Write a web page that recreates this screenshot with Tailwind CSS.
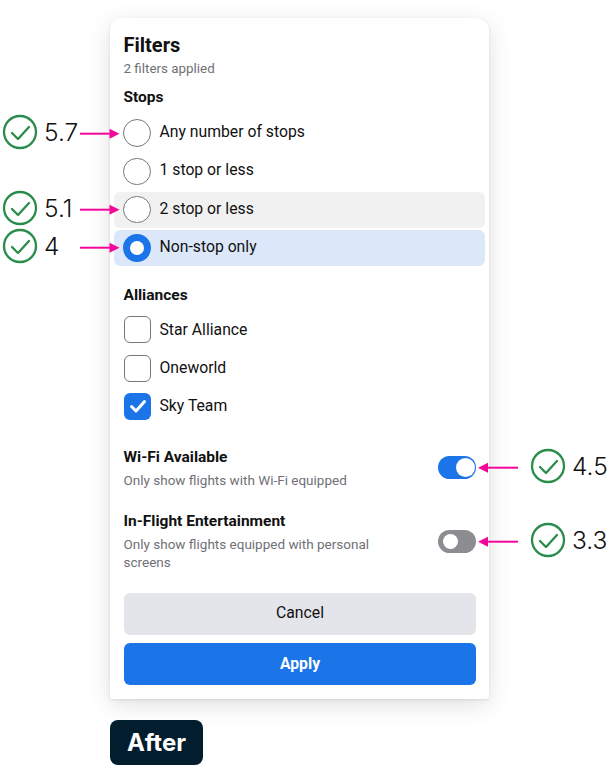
<!DOCTYPE html>
<html><head><meta charset="utf-8"><script src="https://cdn.jsdelivr.net/npm/@tailwindcss/browser@4"></script></head>
<body class="bg-white font-['Roboto',sans-serif] text-[#111] overflow-hidden">
<div class="relative w-[614px] h-[770px] overflow-hidden">
  <div class="ml-[110px] mt-[18px] w-[379px] h-[681px] bg-white rounded-t-[12px] rounded-b-[2px] shadow-[0_6px_24px_rgba(0,0,0,0.12),0_1px_3px_rgba(0,0,0,0.10)] pt-[16px] pl-[14px] pr-[13px] flex flex-col">
    <div class="text-[20px] leading-[22px] font-bold -ml-[0.5px]">Filters</div>
    <div class="text-[13.4px] leading-[16px] mt-[5px] text-[#6f7076] -ml-[0.5px]">2 filters applied</div>
    <div class="text-[15.5px] leading-[18px] mt-[11px] font-bold -ml-[0.5px]">Stops</div>
    <div class="flex flex-col mt-[9px] -ml-[10px] -mr-[9px]">
      <div class="h-[36px] flex items-center gap-[9px] pl-[9px] mb-[2.3px] text-[15.75px]"><span class="w-[27.5px] h-[27.5px] rounded-full border border-[#77777b] bg-white"></span><span class="-mt-[2px]">Any number of stops</span></div>
      <div class="h-[36px] flex items-center gap-[9px] pl-[9px] mb-[2.3px] text-[15.75px]"><span class="w-[27.5px] h-[27.5px] rounded-full border border-[#77777b] bg-white"></span><span class="-mt-[2px]">1 stop or less</span></div>
      <div class="h-[36px] flex items-center gap-[9px] pl-[9px] mb-[2.3px] text-[15.75px] bg-[#f1f1f1] rounded-[6px]"><span class="w-[27.5px] h-[27.5px] rounded-full border border-[#77777b] bg-white"></span><span class="-mt-[2px]">2 stop or less</span></div>
      <div class="h-[36px] flex items-center gap-[9px] pl-[9px] text-[15.75px] bg-[#dce8fa] rounded-[6px]"><span class="w-[27.5px] h-[27.5px] rounded-full border-[7px] border-[#1b74e8] bg-white"></span><span class="-mt-[2px]">Non-stop only</span></div>
    </div>
    <div class="text-[15.5px] leading-[18px] mt-[20px] font-bold -ml-[0.5px]">Alliances</div>
    <div class="flex flex-col mt-[7.5px]">
      <div class="h-[36px] flex items-center gap-[8.5px] mb-[3.5px] text-[15.75px]"><span class="w-[27px] h-[27px] rounded-[6px] border border-[#77777b]"></span><span class="mt-[1px]">Star Alliance</span></div>
      <div class="h-[36px] flex items-center gap-[8.5px] mb-[1.5px] text-[15.75px]"><span class="w-[27px] h-[27px] rounded-[6px] border border-[#77777b]"></span><span class="-mt-[2px]">Oneworld</span></div>
      <div class="h-[36px] flex items-center gap-[8.5px] text-[15.75px]"><span class="w-[27px] h-[27px] rounded-[6px] bg-[#1b74e8] flex items-center justify-center"><svg width="20" height="20" viewBox="0 0 20 20" fill="none"><path d="M3.5 10.5 L8 15 L16.5 5.5" stroke="#fff" stroke-width="3" stroke-linecap="round" stroke-linejoin="round"/></svg></span><span class="-mt-[1px]">Sky Team</span></div>
    </div>
    <div class="flex items-start justify-between mt-[23.5px]">
      <div class="-ml-[0.5px]"><div class="text-[15.5px] leading-[18px] font-bold">Wi-Fi Available</div><div class="text-[13.5px] leading-[18px] mt-[5px] text-[#6f7076]">Only show flights with Wi-Fi equipped</div></div>
      <div class="w-[38px] h-[23px] mt-[8px] rounded-full bg-[#1b74e8] flex items-center justify-end pr-[1.5px]"><span class="w-[19px] h-[19px] rounded-full bg-white"></span></div>
    </div>
    <div class="flex items-start justify-between mt-[23px]">
      <div class="w-[270px] -ml-[0.5px]"><div class="text-[15.5px] leading-[18px] font-bold">In-Flight Entertainment</div><div class="text-[13.5px] leading-[18px] mt-[5px] text-[#6f7076]">Only show flights equipped with personal screens</div></div>
      <div class="w-[38px] h-[23px] mt-[18px] rounded-full bg-[#8c8d91] flex items-center pl-[4.5px]"><span class="w-[15px] h-[15px] rounded-full bg-white"></span></div>
    </div>
    <div class="mt-[22px] h-[42px] pb-[3px] rounded-[6px] bg-[#e4e5ea] flex items-center justify-center text-[15.75px]">Cancel</div>
    <div class="mt-[8.5px] h-[42px] pb-[2px] rounded-[6px] bg-[#1b74e8] flex items-center justify-center text-[15.75px] font-bold text-white">Apply</div>
  </div>
  <div class="ml-[110px] mt-[21px] w-[93px] h-[45px] rounded-[8px] bg-[#021d2e] text-white font-['Inter',sans-serif] font-bold text-[24px] flex items-center justify-center">After</div>

  <!-- annotations -->
  <svg class="absolute left-0 top-0 pointer-events-none" width="614" height="770" fill="none">
    <g stroke="#2a8c4a" stroke-width="2.300"><circle cx="20" cy="132" r="16"/><circle cx="20" cy="208" r="16"/><circle cx="20" cy="246" r="16"/><circle cx="548" cy="466" r="16"/><circle cx="548" cy="540" r="16"/></g>
    <g stroke="#2a8c4a" stroke-width="2.300" stroke-linecap="round" stroke-linejoin="round"><path d="M12 133l6 6 11-12"/><path d="M12 209l6 6 11-12"/><path d="M12 247l6 6 11-12"/><path d="M540 467l6 6 11-12"/><path d="M540 541l6 6 11-12"/></g>
    <g stroke="#f5069b" stroke-width="2"><path d="M80 133.700h32"/><path d="M80 209.700h32"/><path d="M80 247.700h32"/><path d="M486 467.700h32"/><path d="M486 541.700h32"/></g>
    <g fill="#f5069b"><path d="M119.500 133.700l-10-5v10z"/><path d="M119.500 209.700l-10-5v10z"/><path d="M119.500 247.700l-10-5v10z"/><path d="M478 467.700l10-5v10z"/><path d="M478 541.700l10-5v10z"/></g>
  </svg>
  <span class="absolute left-[44px] top-[117px] text-[24.5px] leading-[30px] font-['Inter',sans-serif] font-light">5.7</span>
  <span class="absolute left-[44px] top-[193px] text-[24.5px] leading-[30px] font-['Inter',sans-serif] font-light">5.1</span>
  <span class="absolute left-[44px] top-[231px] text-[24.5px] leading-[30px] font-['Inter',sans-serif] font-light">4</span>
  <span class="absolute left-[572px] top-[451px] text-[24.5px] leading-[30px] font-['Inter',sans-serif] font-light">4.5</span>
  <span class="absolute left-[572px] top-[525px] text-[24.5px] leading-[30px] font-['Inter',sans-serif] font-light">3.3</span>
</div>
</body></html>
